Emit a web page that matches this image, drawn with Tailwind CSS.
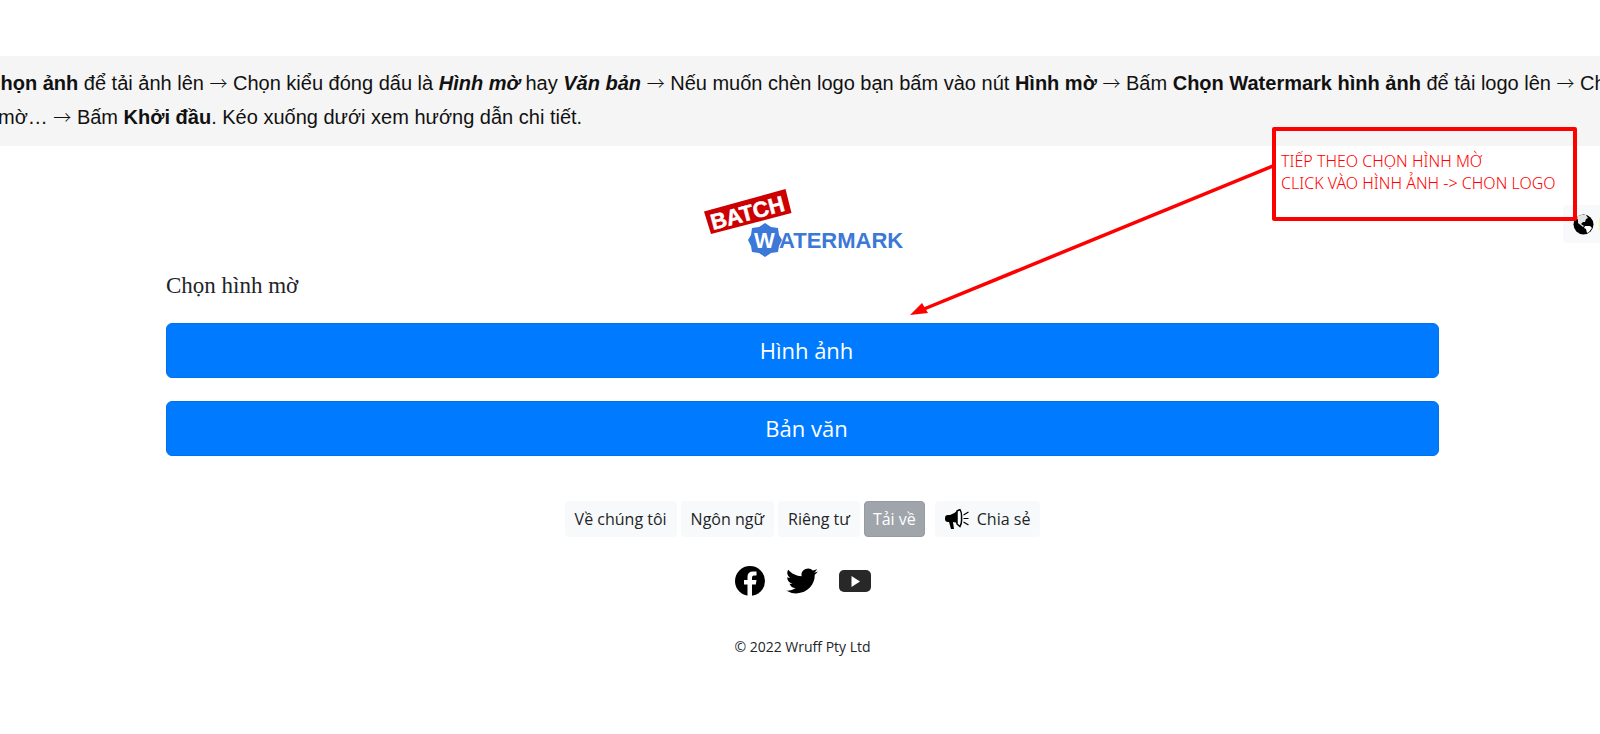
<!DOCTYPE html>
<html lang="vi">
<head>
    <meta charset="UTF-8" />
    <meta name="viewport" content="width=device-width, initial-scale=1.0"/>
    <title>Batch Watermark</title>
    <script src="https://cdn.jsdelivr.net/npm/@tailwindcss/browser@4"></script>
</head>
<body class="relative overflow-x-hidden bg-white pt-14 text-[#212529] font-['Open_Sans','Noto_Sans',sans-serif]">

    <!-- Instructions -->
    <section class="overflow-hidden whitespace-nowrap bg-[#f5f5f5] pt-2.5 pb-3 font-['Liberation_Sans',Arial,sans-serif] text-[20px] leading-[34px] text-[#111]">
        <p class="-ml-3.5"><b>Chọn ảnh</b> để tải ảnh lên <span class="font-['Noto_Sans_CJK_JP',sans-serif] text-lg leading-none font-light">→</span> Chọn kiểu đóng dấu là <b><i>Hình mờ</i></b> hay <b><i>Văn bản</i></b> <span class="font-['Noto_Sans_CJK_JP',sans-serif] text-lg leading-none font-light">→</span> Nếu muốn chèn logo bạn bấm vào nút <b>Hình mờ</b> <span class="font-['Noto_Sans_CJK_JP',sans-serif] text-lg leading-none font-light">→</span> Bấm <b>Chọn Watermark hình ảnh</b> để tải logo lên <span class="font-['Noto_Sans_CJK_JP',sans-serif] text-lg leading-none font-light">→</span> Chọn</p>
        <p class="-ml-0.5">mờ… <span class="font-['Noto_Sans_CJK_JP',sans-serif] text-lg leading-none font-light">→</span> Bấm <b>Khởi đầu</b>. Kéo xuống dưới xem hướng dẫn chi tiết.</p>
    </section>

    <!-- Watermark picker -->
    <main class="ml-[166px] mr-[161px] pt-10">
        <svg class="mx-auto block h-[74px] w-[200px]" viewBox="0 0 200 74" role="img" aria-label="Batch Watermark">
            <path d="M1 25.500 L82.500 3 L88.500 27 L8 48 Z" fill="#c00"/>
            <text x="10" y="44" transform="rotate(-15 10 44)" font-family="Liberation Sans" font-weight="700" font-size="22" fill="#fff" stroke="#fff" stroke-width="0.500">BATCH</text>
            <path d="M62 37 L68 41 L75 42 L76 49 L79 54 L76 60 L75 66 L68 67 L62 71 L56 67 L49 66 L48 60 L45 54 L48 49 L49 42 L56 41 Z" fill="#3b78d8"/>
            <text x="51" y="62" font-family="Liberation Sans" font-weight="700" font-size="22" fill="#fff">W</text>
            <text x="76" y="62" font-family="Liberation Sans" font-weight="700" font-size="22" fill="#3b78d8">ATERMARK</text>
        </svg>
        <h1 class="mt-2 font-['Liberation_Serif',serif] text-[23px] leading-9">Chọn hình mờ</h1>
        <div class="mt-[19px] flex flex-col gap-[23px]">
            <button class="h-[55px] w-full rounded-md border border-[#0072f0] bg-[#007bff] pl-2 text-[22px] text-white">Hình ảnh</button>
            <button class="h-[55px] w-full rounded-md border border-[#0072f0] bg-[#007bff] pl-2 text-[22px] text-white">Bản văn</button>
        </div>
    </main>

    <!-- Footer -->
    <footer class="ml-[166px] mr-[161px] flex flex-col items-center pt-[45px]">
        <nav class="flex gap-1 text-base">
            <a href="#" class="flex h-9 items-center rounded bg-[#f8f9fa] px-2.5">Về chúng tôi</a>
            <a href="#" class="flex h-9 items-center rounded bg-[#f8f9fa] px-2.5">Ngôn ngữ</a>
            <a href="#" class="flex h-9 items-center rounded bg-[#f8f9fa] px-2.5">Riêng tư</a>
            <button class="h-9 rounded border border-[#969ba1] bg-[#a0a5ab] px-2 text-white">Tải về</button>
            <button class="ml-1.5 flex h-9 items-center gap-2 rounded bg-[#f8f9fa] px-2.5">
                <svg class="h-5 w-6" viewBox="0 0 24 20">
                    <path d="M0 9 Q0 6 3 6 H5 Q9 5 13 1 V15 Q11 13 8 13 L9 20 H6 L4 13 H3 Q0 13 0 10 Z" fill="#000"/>
                    <path d="M12 2 L15 .5 Q17 4 16.500 9 Q17 14 15 17.500 L12 15 Z" fill="#fff" stroke="#000" stroke-width="1.500"/>
                    <path d="M18.500 6 L23.500 3 M18.500 9.500 H23.500 M18.500 13 L23.500 16" stroke="#000" stroke-width="1.200"/>
                </svg>
                Chia sẻ
            </button>
        </nav>
        <div class="mt-[29px] flex items-center gap-[21px]">
            <a href="#" aria-label="Facebook">
                <svg class="size-[30px]" viewBox="0 0 30 30"><circle cx="15" cy="15" r="15"/><path d="M12.500 30V18.500H9V14h3.500v-3q0-5.500 5.500-5.500h3.500v4H19q-2 0-2 2V14h4.500l-.7 4.500H17V30z" fill="#fff"/></svg>
            </a>
            <a href="#" aria-label="Twitter">
                <svg class="h-[28px] w-[32px]" viewBox="0 1 24 22" preserveAspectRatio="none"><path d="M23.950 4.570a10 10 0 0 1-2.820.78 4.960 4.960 0 0 0 2.160-2.720c-.95.550-2 .950-3.130 1.180a4.920 4.920 0 0 0-8.380 4.480C7.690 8.100 4.070 6.130 1.640 3.160a4.920 4.920 0 0 0 1.520 6.570 4.900 4.900 0 0 1-2.230-.61v.06c0 2.390 1.700 4.370 3.950 4.830a5 5 0 0 1-2.210.08 4.940 4.940 0 0 0 4.600 3.420A9.870 9.870 0 0 1 0 19.540a14 14 0 0 0 7.550 2.210c9.050 0 14-7.500 14-13.980 0-.21 0-.42-.02-.63a9.940 9.940 0 0 0 2.420-2.570z"/></svg>
            </a>
            <a href="#" aria-label="YouTube">
                <svg class="h-6 w-8" viewBox="0 0 32 24"><rect y="1" width="32" height="22" rx="5" fill="#282828"/><path d="M12.500 7v11l8.500-5.500z" fill="#fff"/></svg>
            </a>
        </div>
        <p class="mt-[41px] text-sm">© 2022 Wruff Pty Ltd</p>
    </footer>

    <!-- Language button on the right edge -->
    <button class="absolute right-0 top-[205px] flex h-[38px] w-[37px] items-center justify-between rounded-l bg-[#f8f9fa] pl-2.5" aria-label="Ngôn ngữ">
        <svg class="size-[21px]" viewBox="0 0 21 21">
            <circle cx="10.500" cy="10.500" r="10" fill="#000"/>
            <path d="M5 2 L8 1 L13 1 L15 4 L13 5 L12 8 L10 8 L8 10 L11 12 L10 13 L5 9 L5 6 L4 4 Z" fill="#e5e5e5"/>
            <path d="M12 12 L17 12 L19 14 L16 18 L14 19 L13 15 L11 14 Z" fill="#fff"/>
        </svg>
        <span class="h-3 w-px bg-[#fff3a0]"></span>
    </button>

    <!-- Callout with arrow -->
    <div class="absolute right-[23px] top-[127px] h-[94px] w-[305px] rounded-xs border-4 border-[#f00] pt-[19px] pl-[5px] font-['Noto_Sans','Open_Sans',sans-serif] text-base leading-[22px] font-light whitespace-nowrap text-[#f00]">
        <p>TIẾP THEO CHỌN HÌNH MỜ</p>
        <p>CLICK VÀO HÌNH ẢNH -&gt; CHON LOGO</p>
    </div>
    <svg class="pointer-events-none absolute right-[326px] top-[164px] h-[154px] w-[366px]" viewBox="0 0 366 154">
        <path d="M365 2 L16 145" stroke="#f00" stroke-width="3.500" fill="none"/>
        <path d="M2 151 L14 139 L20 149 Z" fill="#f00"/>
    </svg>
</body>
</html>
